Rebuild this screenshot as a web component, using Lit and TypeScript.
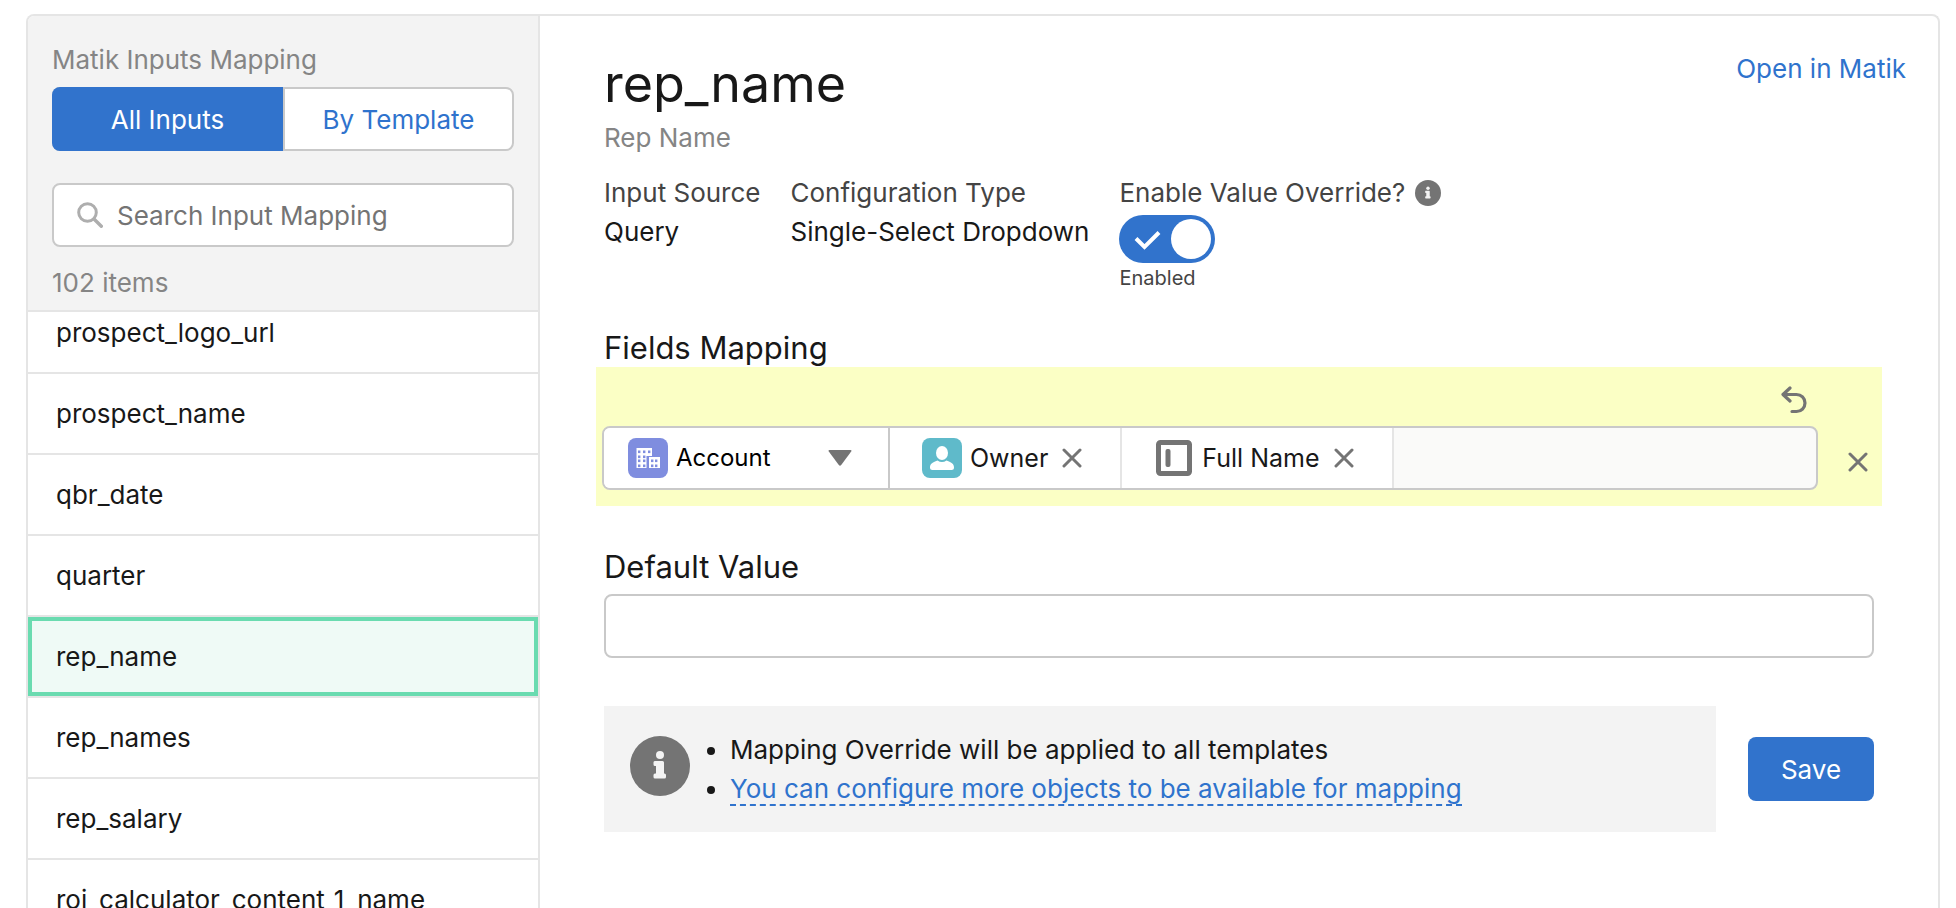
import { LitElement, html, css, svg } from "lit";
import { customElement, property, state } from "lit/decorators.js";
import { classMap } from "lit/directives/class-map.js";

const closeIcon = html`<svg class="icon" width="20" height="20" viewBox="0 0 20 20" aria-hidden="true">
  <path d="M2 2 18 18M18 2 2 18" fill="none" stroke="#747474" stroke-width="3" stroke-linecap="round" />
</svg>`;

const undoIcon = html`<svg class="icon" width="26" height="28" viewBox="0 0 26 28" aria-hidden="true">
  <path d="M9 2 2 8.500 9 15M2.500 8.500H15.500A8.500 8.500 0 0 1 15.500 25.500H11" fill="none" stroke="#747474"
    stroke-width="3.200" stroke-linecap="round" stroke-linejoin="round" />
</svg>`;

const searchIcon = html`<svg class="icon" width="26" height="26" viewBox="0 0 26 26" aria-hidden="true">
  <circle cx="10.500" cy="10.500" r="8.800" fill="none" stroke="#aeaeae" stroke-width="3" />
  <path d="M17 17 24.300 24.300" stroke="#aeaeae" stroke-width="3.400" stroke-linecap="round" />
</svg>`;

const infoIcon = (size: number) => html`<svg class="icon" width=${size} height=${size} viewBox="0 0 60 60" aria-hidden="true">
  <circle cx="30" cy="30" r="30" fill="#747474" />
  <circle cx="30" cy="19" r="4" fill="#f3f3f3" />
  <path d="M25.500 25h7a1.500 1.500 0 0 1 1.500 1.500V37.500h.5a1.500 1.500 0 0 1 1.500 1.500v2a1.500 1.500 0 0 1-1.500 1.500h-9.500a1.500 1.500 0 0 1-1.500-1.500v-2a1.500 1.500 0 0 1 1.500-1.500h1V30h-1a1.500 1.500 0 0 1-1.500-1.500v-2A1.500 1.500 0 0 1 25.500 25z" fill="#f3f3f3" />
</svg>`;

const windows = [
  [11, 14], [16, 14], [21, 14],
  [11, 19], [16, 19],
  [11, 23], [16, 23],
  [11, 28], [16, 28],
  [24, 23], [28, 23],
  [24, 28], [28, 28],
];

const accountIcon = html`<svg class="icon" width="40" height="40" viewBox="0 0 40 40" aria-hidden="true">
  <rect width="40" height="40" rx="8" fill="#7f8ddf" />
  <path d="M8.500 10H24V18H18.500V30H8.500zM21 19H32V30H21z" fill="#fff" />
  ${windows.map(([x, y]) => svg`<rect x=${x - 1} y=${y - 1.5} width="2.400" height="2.600" fill="#7f8ddf" />`)}
</svg>`;

const ownerIcon = html`<svg class="icon" width="40" height="40" viewBox="0 0 40 40" aria-hidden="true">
  <rect width="40" height="40" rx="8" fill="#5fbaca" />
  <ellipse cx="20" cy="15" rx="6" ry="7" fill="#fff" />
  <path d="M8 29.500C8 26 10 24.500 15.500 22.500Q20 25.500 24.500 22.500C30 24.500 32 26 32 29.500Q32 32 29.500 32H10.500Q8 32 8 29.500z" fill="#fff" />
</svg>`;

const fieldIcon = html`<svg class="icon" width="40" height="40" viewBox="0 0 40 40" aria-hidden="true">
  <rect x="4.500" y="4.500" width="31" height="31" rx="2" fill="#fff" stroke="#747474" stroke-width="5" />
  <rect x="11.500" y="11" width="5" height="18" rx="2" fill="#747474" />
</svg>`;

const base = css`
  * {
    box-sizing: border-box;
  }
  h1,
  h2,
  p,
  ul {
    margin: 0;
    padding: 0;
    font-weight: 400;
  }
  button,
  input,
  select {
    margin: 0;
    padding: 0;
    border: 0;
    background: none;
    color: inherit;
    font: inherit;
  }
  button {
    cursor: pointer;
  }
  a {
    color: #2f73cd;
    text-decoration: none;
  }
  .icon {
    display: block;
    flex: none;
  }
`;

@customElement("input-sidebar")
export class InputSidebar extends LitElement {
  @property({ type: Array }) items: string[] = [];
  @property() selected = "";
  @property({ type: Number }) total = 0;
  @state() private view = "All Inputs";

  static styles = [
    base,
    css`
      :host {
        display: flex;
        flex-direction: column;
        min-height: 0;
        border-right: 2px solid #e5e5e5;
      }
      .head {
        padding: 24px 24px 8px;
        background: #f3f3f3;
        border-bottom: 2px solid #e5e5e5;
        color: #858585;
      }
      .title {
        font-size: inherit;
      }
      .tabs {
        display: grid;
        grid-template-columns: 1fr 1fr;
        height: 64px;
        margin: 8px 0 32px;
        border: 2px solid #c9c9c9;
        border-radius: 8px;
        background: #fff;
      }
      .tab {
        color: #2f73cd;
      }
      .tab.on {
        margin: -2px 0 -2px -2px;
        border-radius: 8px 0 0 8px;
        background: #3173cc;
        color: #fff;
      }
      .tab:not(.on) {
        border-left: 2px solid #c9c9c9;
      }
      .search {
        display: flex;
        align-items: center;
        gap: 14px;
        height: 64px;
        padding: 0 23px;
        border: 2px solid #c9c9c9;
        border-radius: 8px;
        background: #fff;
      }
      .search input {
        flex: 1;
        min-width: 0;
        outline: none;
        color: #181818;
      }
      .search input::placeholder {
        color: #747474;
        opacity: 1;
      }
      .count {
        margin-top: 16px;
      }
      .list {
        flex: 1;
        min-height: 0;
        overflow-y: auto;
        scrollbar-width: none;
        list-style: none;
      }
      .row {
        border-bottom: 2px solid #e5e5e5;
      }
      .row button {
        display: block;
        width: 100%;
        padding: 16px 24px;
        border: 4px solid transparent;
        text-align: left;
        color: #181818;
      }
      .row.current button {
        border-color: #6adbb0;
        background: #effaf6;
      }
    `,
  ];

  firstUpdated() {
    const list = this.renderRoot.querySelector(".list");
    if (list) list.scrollTop = 19;
  }

  render() {
    return html`
      <div class="head">
        <h2 class="title">Matik Inputs Mapping</h2>
        <div class="tabs">
          ${["All Inputs", "By Template"].map(
            (name) => html`<button
              class=${classMap({ tab: true, on: name === this.view })}
              aria-pressed=${name === this.view}
              @click=${() => (this.view = name)}
            >${name}</button>`
          )}
        </div>
        <label class="search">
          ${searchIcon}
          <input type="text" aria-label="Search Input Mapping" placeholder="Search Input Mapping" />
        </label>
        <p class="count">${this.total} items</p>
      </div>
      <ul class="list">
        ${this.items.map(
          (name) => html`<li class=${classMap({ row: true, current: name === this.selected })}>
            <button>${name}</button>
          </li>`
        )}
      </ul>
    `;
  }
}

@customElement("field-path")
export class FieldPath extends LitElement {
  static styles = [
    base,
    css`
      :host {
        display: grid;
        grid-template-columns: 1fr 48px;
        column-gap: 16px;
        margin: 0 -8px;
        padding: 0 0 16px 6px;
        background: #fbffc5;
        font-size: 25px;
        line-height: 40px;
      }
      .undo {
        grid-column: 1;
        justify-self: end;
        display: grid;
        place-items: center;
        width: 48px;
        height: 52px;
        margin-top: 7px;
      }
      .path {
        grid-column: 1;
        display: flex;
        height: 64px;
        overflow: hidden;
        border: 2px solid #c9c9c9;
        border-radius: 8px;
        background: #fafaf9;
      }
      .object {
        display: grid;
        grid-template-columns: 284px;
        align-items: center;
        border-right: 2px solid #c9c9c9;
        background: #fff;
      }
      .object > * {
        grid-area: 1 / 1;
      }
      .object .icon {
        margin-left: 24px;
        pointer-events: none;
      }
      .object .caret {
        justify-self: end;
        margin-right: 36px;
      }
      .object select {
        width: 100%;
        height: 60px;
        padding: 0 72px;
        appearance: none;
        color: #000;
        font-size: 24px;
      }
      .step {
        display: flex;
        align-items: center;
        gap: 8px;
        padding: 0 32px;
        border-right: 2px solid #e5e5e5;
        background: #fff;
        color: #181818;
      }
      .clear {
        display: grid;
        place-items: center;
        width: 32px;
        height: 32px;
      }
      .remove {
        display: grid;
        place-items: center;
        padding-top: 8px;
      }
    `,
  ];

  render() {
    return html`
      <button class="undo" aria-label="Undo">${undoIcon}</button>
      <div class="path">
        <div class="object">
          <select aria-label="Object"><option>Account</option></select>
          ${accountIcon}
          <svg class="icon caret" width="24" height="16" viewBox="0 0 24 16" aria-hidden="true">
            <path d="M1.500 0h21q1.500 0 .7 1.500L13.200 15q-1.200 1.500-2.400 0L.8 1.500Q0 0 1.500 0z" fill="#747474" />
          </svg>
        </div>
        <div class="step">
          ${ownerIcon}<span>Owner</span>
          <button class="clear" aria-label="Clear Owner">${closeIcon}</button>
        </div>
        <div class="step">
          ${fieldIcon}<span>Full Name</span>
          <button class="clear" aria-label="Clear Full Name">${closeIcon}</button>
        </div>
      </div>
      <button class="remove" aria-label="Remove mapping">${closeIcon}</button>
    `;
  }
}

@customElement("input-detail")
export class InputDetail extends LitElement {
  @property() name = "";
  @property() label = "";

  static styles = [
    base,
    css`
      :host {
        display: block;
        min-width: 0;
        padding: 33px 32px 32px 64px;
      }
      .top {
        display: flex;
        justify-content: space-between;
        align-items: flex-start;
      }
      h1 {
        font-size: 52px;
        line-height: 69px;
      }
      .body {
        padding-right: 32px;
      }
      .sub {
        color: #858585;
      }
      .facts {
        display: flex;
        gap: 30px;
        margin-top: 16px;
      }
      .term {
        display: flex;
        align-items: center;
        gap: 10px;
        color: #444;
      }
      .switch {
        display: grid;
        width: 96px;
        margin-top: 3px;
      }
      .switch > * {
        grid-area: 1 / 1;
      }
      .switch input {
        width: 96px;
        height: 48px;
        appearance: none;
        border-radius: 24px;
        background: #b0b0b0;
        cursor: pointer;
      }
      .switch input:checked {
        background: #3173cc;
      }
      .switch .icon {
        pointer-events: none;
      }
      .state {
        font-size: 20px;
        line-height: 30px;
        color: #444;
      }
      .section {
        display: block;
        font-size: 31px;
        line-height: 38px;
      }
      .fields {
        margin-top: 36px;
      }
      .default {
        margin: 42px 0 8px;
      }
      .value {
        display: block;
        width: 100%;
        height: 64px;
        padding: 0 24px;
        border: 2px solid #c9c9c9;
        border-radius: 8px;
        background: #fff;
      }
      .foot {
        display: flex;
        align-items: center;
        gap: 32px;
        margin-top: 48px;
      }
      .note {
        flex: 1;
        display: flex;
        align-items: flex-start;
        padding: 24px 26px;
        background: #f3f3f3;
      }
      .note .icon {
        margin-top: 6px;
      }
      .note ul {
        padding-left: 40px;
      }
      .note a {
        border-bottom: 2px dashed #2f73cd;
      }
      .save {
        width: 126px;
        height: 64px;
        border-radius: 8px;
        background: #3173cc;
        color: #fff;
      }
    `,
  ];

  render() {
    return html`
      <div class="top">
        <h1>${this.name}</h1>
        <a href="#open">Open in Matik</a>
      </div>
      <div class="body">
        <p class="sub">${this.label}</p>
        <div class="facts">
          <div>
            <div class="term">Input Source</div>
            <div>Query</div>
          </div>
          <div>
            <div class="term">Configuration Type</div>
            <div>Single-Select Dropdown</div>
          </div>
          <div>
            <div class="term"><label for="override">Enable Value Override?</label>${infoIcon(26)}</div>
            <div class="switch">
              <input id="override" type="checkbox" role="switch" checked />
              <svg class="icon" width="96" height="48" viewBox="0 0 96 48" aria-hidden="true">
                <path d="M17 23.500 25.500 32 40 17.500" fill="none" stroke="#fff" stroke-width="4" />
                <circle cx="72" cy="24" r="20" fill="#fff" />
              </svg>
            </div>
            <div class="state">Enabled</div>
          </div>
        </div>
        <h2 class="section fields">Fields Mapping</h2>
        <field-path></field-path>
        <label class="section default" for="default">Default Value</label>
        <input class="value" id="default" type="text" />
        <div class="foot">
          <div class="note">
            ${infoIcon(60)}
            <ul>
              <li>Mapping Override will be applied to all templates</li>
              <li><a href="#objects">You can configure more objects to be available for mapping</a></li>
            </ul>
          </div>
          <button class="save">Save</button>
        </div>
      </div>
    `;
  }
}

@customElement("app-root")
export class AppRoot extends LitElement {
  private items = [
    "prospect_logo_url",
    "prospect_name",
    "qbr_date",
    "quarter",
    "rep_name",
    "rep_names",
    "rep_salary",
    "roi_calculator_content_1_name",
  ];

  static styles = css`
    :host {
      display: block;
      box-sizing: border-box;
      height: 100vh;
      padding: 14px 16px 0 26px;
      overflow: hidden;
      background: #fff;
      color: #181818;
      font: 400 26px/39px Inter, "Liberation Sans", sans-serif;
    }
    .card {
      box-sizing: border-box;
      display: grid;
      grid-template-columns: 512px minmax(0, 1fr);
      grid-template-rows: minmax(0, 1fr);
      height: 100%;
      border: 2px solid #e5e5e5;
      border-bottom: 0;
      border-radius: 8px 8px 0 0;
      overflow: hidden;
    }
  `;

  render() {
    return html`<div class="card">
      <input-sidebar .items=${this.items} selected="rep_name" total="102"></input-sidebar>
      <input-detail name="rep_name" label="Rep Name"></input-detail>
    </div>`;
  }
}
